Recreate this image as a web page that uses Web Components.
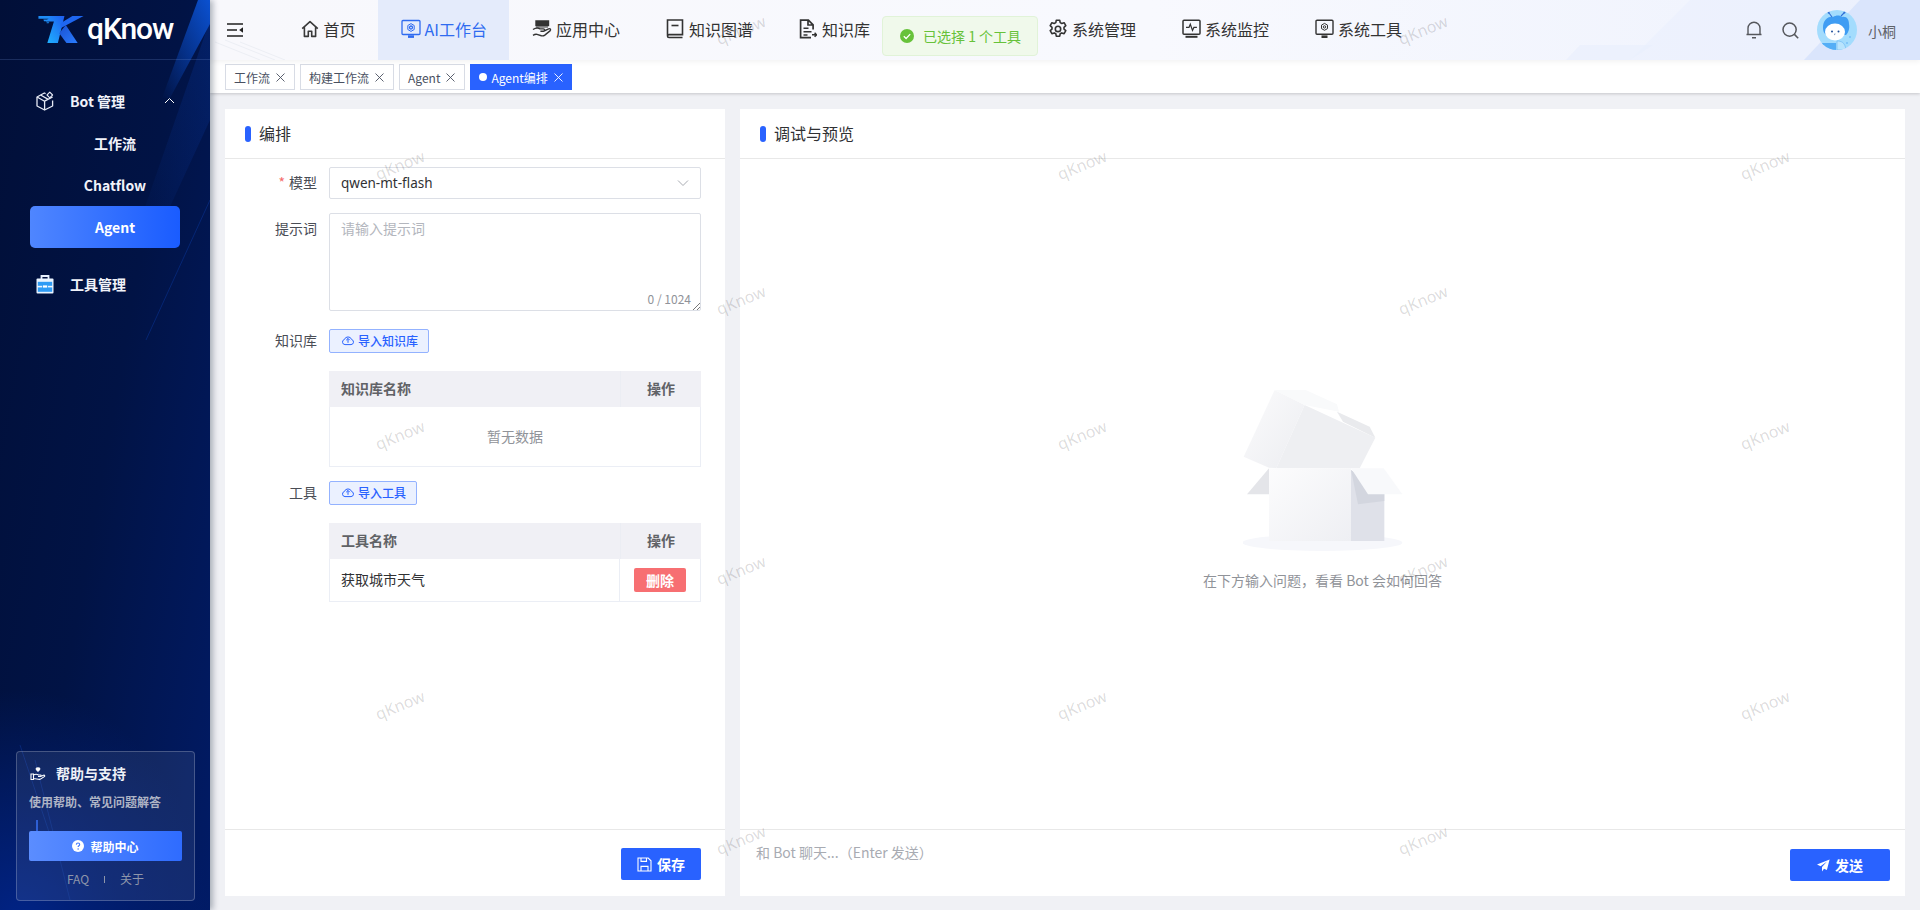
<!DOCTYPE html>
<html lang="zh-CN">
<head>
<meta charset="utf-8">
<title>qKnow</title>
<style>
html,body{margin:0;padding:0;height:100%;overflow:hidden;background:#f0f2f5;
font-family:"Noto Sans CJK SC",sans-serif;color:#303133;}
</style>
</head>
<body>
<qk-app>
  <qk-sidebar slot="side">
    <qk-logo></qk-logo>
    <qk-menu-item icon="bot" chevron>Bot 管理</qk-menu-item>
    <qk-sub-item>工作流</qk-sub-item>
    <qk-sub-item>Chatflow</qk-sub-item>
    <qk-sub-item active>Agent</qk-sub-item>
    <qk-menu-item icon="tool" style="margin-top:15px">工具管理</qk-menu-item>
    <qk-help></qk-help>
  </qk-sidebar>

  <qk-header slot="head">
    <qk-nav-item>
      <svg slot="icon" width="18" height="18" viewBox="0 0 18 18" fill="none" stroke="#3a3a3a" stroke-width="1.6" stroke-linejoin="round"><path d="M1.2 8.6 9 1.6l7.8 7M3.4 7.2V16.4h3.9v-5.2h3.4v5.2h3.9V7.2"/></svg>首页</qk-nav-item>
    <qk-nav-item active>
      <svg slot="icon" width="20" height="20" viewBox="0 0 20 20" fill="none" stroke="#2f6bf0" stroke-width="1.3"><rect x="1" y="1.5" width="18" height="14" rx="1"/><path d="M7 17.6h6" stroke-width="2.6"/><circle cx="10" cy="8.5" r="1.5"/><path d="M10 4.6l3.2 1.9v4l-3.2 1.9-3.2-1.9v-4z" stroke-width="1"/></svg>AI工作台</qk-nav-item>
    <qk-nav-item>
      <svg slot="icon" width="20" height="18" viewBox="0 0 20 18" fill="none" stroke="#333" stroke-width="1.4"><path d="M4 1h12.5v4.5H4z" fill="#333"/><path d="M1 9.5c2.5-1.6 5-2 7-.6h3.5c1.4 0 1.4 2.4 0 2.4H8.4M12 11l4.6-2.2c1.7-.6 2.6 1 1.4 2.1l-5.2 4.2c-1 .7-2.2.9-3.4.6L5 14.4c-1.4-.3-2.6.1-4 1"/><path d="M4 7h12" stroke-width="1"/></svg>应用中心</qk-nav-item>
    <qk-nav-item>
      <svg slot="icon" width="18" height="20" viewBox="0 0 18 20" fill="none" stroke="#333" stroke-width="1.6"><path d="M1.5 16.4V1h15v14.6H3c-1 0-1.5.6-1.5 1.4s.5 1.5 1.5 1.5h13.5"/><path d="M5.5 6.5h7"/></svg>知识图谱</qk-nav-item>
    <qk-nav-item>
      <svg slot="icon" width="18" height="20" viewBox="0 0 18 20" fill="none" stroke="#333" stroke-width="1.7"><path d="M12 18.6H1.6V1.2h7.8l4.7 4.7v4.6M9 1.4v4.6h5"/><path d="M4.5 9.2h5M4.5 12.8h8M4.5 16h4M13 15.8h4.4M15.6 13.8l2 2-2 2" stroke-width="1.5"/></svg>知识库</qk-nav-item>
    <qk-nav-spacer></qk-nav-spacer>
    <qk-nav-item>
      <svg slot="icon" width="20" height="20" viewBox="0 0 20 20" fill="none" stroke="#333" stroke-width="1.6" stroke-linejoin="round"><path d="M8.3 1.2h3.4l.5 2.4 1.6.9 2.3-.8 1.7 3-1.8 1.6v1.8l1.8 1.6-1.7 3-2.3-.8-1.6.9-.5 2.4H8.3l-.5-2.4-1.6-.9-2.3.8-1.7-3 1.8-1.6V8.3L2.2 6.7l1.7-3 2.3.8 1.6-.9z"/><circle cx="10" cy="9.9" r="2.7"/></svg>系统管理</qk-nav-item>
    <qk-nav-item>
      <svg slot="icon" width="19" height="20" viewBox="0 0 19 20" fill="none" stroke="#333" stroke-width="1.5"><rect x="1" y="1.2" width="17" height="14" rx="1"/><path d="M3.5 17.8h12" stroke-width="2"/><path d="M4 8.4h3l1.3-3.2 2.2 6.2 1.4-3h3" stroke-width="1.2"/></svg>系统监控</qk-nav-item>
    <qk-nav-item>
      <svg slot="icon" width="19" height="20" viewBox="0 0 19 20" fill="none" stroke="#333" stroke-width="1.4"><rect x="1" y="1.2" width="17" height="14" rx="1"/><path d="M6.5 17.7h6" stroke-width="2.6"/><path d="M9.5 4.4l3 1.7v3.5l-3 1.7-3-1.7V6.1z" stroke-width="1"/><circle cx="9.5" cy="7.9" r="1.2" stroke-width="1"/></svg>系统工具</qk-nav-item>
    <qk-user slot="right"></qk-user>
  </qk-header>

  <qk-tags slot="tags">
    <qk-tag>工作流</qk-tag>
    <qk-tag>构建工作流</qk-tag>
    <qk-tag>Agent</qk-tag>
    <qk-tag active>Agent编排</qk-tag>
  </qk-tags>

  <qk-card style="width:500px" slot="left" heading="编排">
    <qk-form>
      <qk-row label="模型" required><qk-select>qwen-mt-flash</qk-select></qk-row>
      <qk-row label="提示词" style="margin-top:14px"><qk-textarea placeholder="请输入提示词" counter="0 / 1024"></qk-textarea></qk-row>
      <qk-row label="知识库" style="margin-top:18px" compact><qk-import>导入知识库</qk-import></qk-row>
      <qk-row style="margin-top:18px">
        <qk-table heading="知识库名称"><qk-empty-row>暂无数据</qk-empty-row></qk-table>
      </qk-row>
      <qk-row label="工具" style="margin-top:14px" compact><qk-import>导入工具</qk-import></qk-row>
      <qk-row style="margin-top:18px">
        <qk-table heading="工具名称"><qk-table-row>获取城市天气<qk-danger slot="action">删除</qk-danger></qk-table-row></qk-table>
      </qk-row>
    </qk-form>
    <qk-primary slot="footer" style="margin-left:auto;margin-right:24px">
      <svg slot="icon" width="15" height="15" viewBox="0 0 15 15" fill="none" stroke="#fff" stroke-width="1.1"><path d="M1 1h10.2L14 3.8V14H1zM4 14V9.4h7V14M4 1v3.4h5.5V1"/></svg>保存</qk-primary>
  </qk-card>

  <qk-card style="flex:1" slot="left" heading="调试与预览">
    <qk-empty>在下方输入问题，看看 Bot 会如何回答</qk-empty>
    <qk-chat-hint slot="footer">和 Bot 聊天...（Enter 发送）</qk-chat-hint>
    <qk-primary slot="footer" wide style="margin-left:auto;margin-right:15px;margin-top:1px">
      <svg slot="icon" width="13" height="13" viewBox="0 0 13 13"><path d="M12.6.4 0 5.6l3.6 1.6L10 2.6 5 8v4.4l2-2.7 2.9 1.2z" fill="#fff"/></svg>发送</qk-primary>
  </qk-card>

  <qk-toast slot="over">已选择 1 个工具</qk-toast>
  <qk-watermark slot="over"></qk-watermark>
</qk-app>

<script>
const ICONS = {
  bot:`<svg width="18" height="20" viewBox="0 0 18 20" fill="none" stroke="#e6eaf5" stroke-width="1.3" stroke-linejoin="round"><path d="M9.6 2.6 8.3 2 1 6v9l7.6 4 8-4V9.4"/><path d="M1 6l7.6 4.2 8-4.2M8.6 10.2V19M4.6 4l7.6 4.4"/><path d="M13.8 1.2l2.8 2.8-2.8 2.8L11 4z" stroke-width="1.1"/></svg>`,
  tool:`<svg width="18" height="19" viewBox="0 0 18 19"><path d="M5.5 4V1h7v3" fill="none" stroke="#eaf2ff" stroke-width="1.8"/><rect x="0.5" y="3.5" width="17" height="15" rx="1" fill="#eaf4ff"/><rect x="1.8" y="6.8" width="14.4" height="4" fill="#2e9bf5"/><rect x="1.8" y="12.4" width="14.4" height="4.4" fill="#2e9bf5"/><rect x="6.5" y="10" width="5" height="3" fill="#fff" stroke="#2e9bf5" stroke-width=".8"/></svg>`
};
const define = (name, html, extra) => {
  class E extends HTMLElement {
    constructor(){ super(); this.attachShadow({mode:'open'}).innerHTML = typeof html === 'function' ? html(this) : html; }
    connectedCallback(){ if (extra) extra(this); }
  }
  customElements.define(name, E);
};

define('qk-app', `<style>
:host{display:grid;grid-template-columns:210px 1fr;height:910px;position:relative;overflow:hidden;background:#f0f1f5}
.main{display:flex;flex-direction:column;min-width:0;height:910px}
.content{flex:1;display:flex;gap:15px;padding:16px 15px 14px;min-height:0}
::slotted([slot=side]){z-index:3}
</style>
<slot name="side"></slot>
<div class="main">
  <slot name="head"></slot>
  <slot name="tags"></slot>
  <div class="content"><slot name="left"></slot></div>
</div>
<slot name="over"></slot>`);

define('qk-sidebar', `<style>
:host{display:flex;flex-direction:column;position:relative;height:910px;color:#fff;overflow:hidden;
 background:
  radial-gradient(ellipse 190px 240px at 20px 930px,#012488 0%,rgba(1,36,136,0) 100%),
  linear-gradient(100deg,#010f38 0%,#011345 50%,#011b66 100%);
 box-shadow:3px 0 6px rgba(0,21,41,.3);}
svg.bg{position:absolute;left:0;top:0;pointer-events:none}
.wrap{position:relative;display:flex;flex-direction:column;flex:1}
</style>
<svg class="bg" width="210" height="910" viewBox="0 0 210 910">
  <defs>
    <linearGradient id="g1" x1="1" y1="0" x2="0" y2="1"><stop offset="0" stop-color="#0b54d8" stop-opacity=".95"/><stop offset="1" stop-color="#0b54d8" stop-opacity="0"/></linearGradient>
    <linearGradient id="g2" x1="1" y1="0" x2="0" y2="1"><stop offset="0" stop-color="#0a3fb0" stop-opacity=".6"/><stop offset="1" stop-color="#0a3fb0" stop-opacity="0"/></linearGradient>
  </defs>
  <polygon points="198,0 210,0 210,24 170,98 162,98" fill="url(#g1)"/>
  <polygon points="210,20 210,120 150,250 130,250" fill="url(#g2)" opacity=".45"/>
  <path d="M210 200 146 340" stroke="#0c3fae" stroke-width="1" opacity=".4"/>
  <path d="M20 745 55 850M35 760 70 900" stroke="#0d3aa0" stroke-width="1" opacity=".45"/>
  <rect x="36" y="820" width="2" height="16" fill="#2b6bff" opacity=".7"/>
</svg>
<div class="wrap"><slot></slot></div>`);

define('qk-logo', `<style>
:host{display:flex;align-items:center;height:59px;border-bottom:1px solid rgba(120,150,220,.22);padding-left:38px;box-sizing:content-box;gap:2px}
span{font:500 30px/1 Roboto,sans-serif;color:#fff;letter-spacing:-1.1px;position:relative;top:-1px}
svg{display:block}
</style>
<svg width="47" height="29" viewBox="113 55 140 88">
  <defs>
    <linearGradient id="k" x1="0" y1="1" x2="1" y2="0"><stop offset="0" stop-color="#1fb4ff"/><stop offset="1" stop-color="#1e5cf0"/></linearGradient>
    <linearGradient id="k2" x1="0" y1="0" x2="1" y2="1"><stop offset="0" stop-color="#1a4fd0"/><stop offset="1" stop-color="#2a7dff"/></linearGradient>
  </defs>
  <path d="M113 58h58l-5 8h-53zM128 69h18l-2 5h-14zM138 77h8l-2 3h-6z" fill="#1e8cf5"/>
  <polygon points="150,58 192,58 172,140 140,140 160,75 135,75" fill="url(#k)"/>
  <polygon points="180,95 250,58 216,58 180,80" fill="#1e66f0"/>
  <polygon points="176,110 196,85 232,140 198,140" fill="url(#k2)"/>
</svg><span>qKnow</span>`);

define('qk-menu-item', el => `<style>
:host{display:flex;align-items:center;height:42px;padding-left:36px;position:relative;font-size:14px;font-weight:700;color:#f1f3fa;line-height:20px}
.ic{width:18px;display:flex;justify-content:center;margin-right:16px}
.chev{position:absolute;left:164px;top:17px}
</style>
<span class="ic">${ICONS[el.getAttribute('icon')]||''}</span><slot></slot>
${el.hasAttribute('chevron')?'<svg class="chev" width="11" height="7" viewBox="0 0 11 7" fill="none" stroke="#fff" stroke-width="1"><path d="M1 6l4.5-4.5L10 6"/></svg>':''}`,
 el => { if (el.hasAttribute('chevron')) el.style.marginTop='20px'; });

define('qk-sub-item', `<style>
:host{display:flex;align-items:center;justify-content:center;height:42px;margin:0 30px;width:150px;padding-left:20px;box-sizing:border-box;font-size:14px;font-weight:700;color:#f1f3fa;border-radius:5px}
:host([active]){background:linear-gradient(90deg,#4f86ff,#1a5cff);color:#fff}
</style><slot></slot>`);

define('qk-help', `<style>
:host{display:block;margin:auto 15px 9px 16px;height:150px;box-sizing:border-box;border:1px solid rgba(255,255,255,.22);border-radius:4px;background:rgba(255,255,255,.075);padding:0 12px}
.t{display:flex;align-items:center;height:22px;margin-top:10px;font-size:14px;font-weight:700;color:#eef1f8;line-height:22px}
.t svg{margin:1px 10px 0 1px}
.d{font-size:12px;font-weight:700;color:#aeb4c5;line-height:18px;margin-top:9px}
.b{display:flex;align-items:center;justify-content:center;gap:6px;height:30px;margin-top:20px;border-radius:2px;background:linear-gradient(90deg,#5b8dff,#2f6cff);font-size:12px;font-weight:700;color:#fff}
.f{display:flex;justify-content:center;align-items:center;font-size:12px;color:#8e96aa;margin-top:9px;line-height:18px}
.f i{width:1px;height:7px;background:#8e96aa;margin:0 15px}
</style>
<div class="t"><svg width="16" height="14" viewBox="0 0 16 14" fill="none" stroke="#fff" stroke-width="1.1"><path d="M1 7h2.5v5.5H1zM3.5 8c2-1.2 3.5-1 5 0h2c.9 0 .9 1.5 0 1.5H8M10.5 9.5l3-1.3c1.1-.4 1.7.7.8 1.4l-3.8 2.5c-.7.4-1.4.4-2.2.2L3.5 11.5"/><path d="M8 1.2c-1-.9-2.4.4-1.4 1.6L8 4.2l1.4-1.4c1-1.2-.4-2.5-1.4-1.6z" fill="#fff"/></svg><span>帮助与支持</span></div>
<div class="d">使用帮助、常见问题解答</div>
<div class="b"><svg width="12" height="12" viewBox="0 0 12 12"><circle cx="6" cy="6" r="6" fill="#fff"/><path d="M4.3 4.6C4.4 3.6 5.1 3 6 3c1 0 1.7.6 1.7 1.5 0 1.3-1.6 1.3-1.6 2.6" fill="none" stroke="#3f77ff" stroke-width="1.1"/><circle cx="6.1" cy="8.9" r=".75" fill="#3f77ff"/></svg><span>帮助中心</span></div>
<div class="f"><span>FAQ</span><i></i><span>关于</span></div>`);

define('qk-header', `<style>
:host{display:flex;align-items:stretch;height:60px;position:relative;z-index:2;background:linear-gradient(90deg,#f8f8fc 0%,#f8f9fe 55%,#eef2fd 100%);box-shadow:0 2px 5px rgba(0,0,0,.05);padding-left:17px;box-sizing:border-box}
svg.bg{position:absolute;left:0;top:0;width:100%;height:60px}
.bar{position:relative;display:flex;align-items:center;width:16px;margin-right:34px}
.nav{position:relative;display:flex;align-items:stretch}
.r{position:relative;margin-left:auto;display:flex}
::slotted(svg){flex:none}
</style>
<svg class="bg" viewBox="0 0 1710 60" preserveAspectRatio="none">
  <polygon points="1356,60 1420,60 1443,45 1370,45" fill="#eaeffc" opacity=".7"/>
  <polygon points="1420,60 1480,0 1710,0 1710,60" fill="#e9effd" opacity=".55"/>
  <polygon points="1594,60 1650,0 1710,0 1710,60" fill="#dae5fc"/>
  <path d="M5 42 50 60M15 40 65 60M30 42 75 60" stroke="#eceef4" stroke-width="1"/>
</svg>
<div class="bar"><svg width="16" height="14" viewBox="0 0 16 14" fill="none" stroke="#1f1f1f" stroke-width="1.5"><path d="M0 1h16M0 7h10M0 13h16"/><path d="M16 4.2v5.6L12.2 7z" fill="#1f1f1f" stroke="none"/></svg></div>
<div class="nav"><slot></slot></div>
<div class="r"><slot name="right"></slot></div>`);

define('qk-nav-item', `<style>
:host{display:flex;align-items:center;justify-content:center;gap:4px;padding:0 22.5px 3px;height:60px;box-sizing:border-box;font-size:16px;color:#333;white-space:nowrap}
:host([active]){background:#e4ebfb;color:#2f6bf0}
.i{width:20px;height:20px;flex:none;display:flex;align-items:center;justify-content:center}
::slotted(svg){flex:none}
</style><span class="i"><slot name="icon"></slot></span><slot></slot>`);

define('qk-nav-spacer', `<style>:host{display:block;width:133px}</style>`);

define('qk-user', `<style>
:host{display:flex;align-items:center;height:60px;padding-right:24px}
svg{display:block}
.n{font-size:14px;color:#5f6368;margin-left:11px;position:relative;top:1px}
.ic{margin-right:20px}
</style>
<svg class="ic" width="16" height="18" viewBox="0 0 16 18" fill="none" stroke="#55575c" stroke-width="1.4"><path d="M2 13.5V7.2a6 6 0 0 1 12 0v6.3M.5 13.5h15M6 16.8h4"/></svg>
<svg class="ic" style="margin-right:18px" width="17" height="17" viewBox="0 0 17 17" fill="none" stroke="#55575c" stroke-width="1.5"><circle cx="7.6" cy="7.6" r="6.6"/><path d="M12.4 12.4l3.8 3.8"/></svg>
<svg width="40" height="40" viewBox="0 0 40 40">
  <defs><clipPath id="c"><circle cx="20" cy="20" r="20"/></clipPath></defs>
  <g clip-path="url(#c)">
    <rect width="40" height="40" fill="#a3dcfd"/>
    <path d="M6 18C6 10 11 6 16 7c3-2 7-2 9 0 5-1 7 3 7 7 1 5-1 9-3 11H9c-2-2-3-4-3-7z" fill="#3f9df3"/>
    <path d="M15 7l-3-4M24 6l3-3" stroke="#2f6fd6" stroke-width="1.1"/>
    <circle cx="11.6" cy="2.6" r="1.1" fill="#2f6fd6"/><circle cx="27.4" cy="2.6" r="1.1" fill="#2f6fd6"/>
    <ellipse cx="18" cy="22" rx="10" ry="8.5" fill="#fff"/>
    <circle cx="15" cy="21.5" r="1" fill="#1f4f9a"/><circle cx="21.5" cy="21.5" r="1" fill="#1f4f9a"/>
    <path d="M18 23.5l-.5 1.6" stroke="#1f4f9a" stroke-width=".6"/>
    <path d="M5 33h14v8H5z" fill="#54aef6"/><path d="M20 31c4 0 8 1 9 9H20z" fill="#b9e4fd" stroke="#6ab6f3" stroke-width=".6"/>
    <circle cx="33" cy="27" r=".7" fill="#4ba2ee"/><circle cx="30" cy="33" r=".7" fill="#4ba2ee"/>
  </g>
</svg>
<span class="n">小桐</span>`);

define('qk-tags', `<style>
:host{display:flex;align-items:flex-start;gap:5px;height:33px;box-sizing:border-box;padding:4px 0 0 15px;background:#fff;box-shadow:0 1px 3px rgba(0,0,0,.18);position:relative;z-index:1}
</style><slot></slot>`);

define('qk-tag', `<style>
:host{display:inline-flex;align-items:center;height:26px;box-sizing:border-box;padding:0 8px;border:1px solid #d8dce5;background:#fff;color:#495060;font-size:12px;white-space:nowrap}
:host([active]){background:#2962ff;border-color:#2962ff;color:#fff;padding-right:7px}
:host([active])::before{content:"";width:8px;height:8px;border-radius:50%;background:#fff;margin-right:4px}
svg{margin-left:5px;display:block}
</style><slot></slot><svg width="11" height="11" viewBox="0 0 11 11" fill="none" stroke="currentColor" stroke-width=".9"><path d="M1.5 1.5l8 8M9.5 1.5l-8 8"/></svg>`);

define('qk-card', el => `<style>
:host{display:flex;flex-direction:column;background:#fff;min-width:0;height:100%}
.h{display:flex;align-items:center;height:49px;padding-left:20px;border-bottom:1px solid #e8e8e8;font-size:16px;color:#303133;box-sizing:content-box;flex:none}
.h i{width:6px;height:16px;border-radius:3px;background:#2962ff;margin-right:8px}
.h span{position:relative;top:-1px}
.b{flex:1;min-height:0;display:flex;flex-direction:column}
.f{border-top:1px solid #e8e8e8;display:flex;align-items:flex-start;padding-top:18px;box-sizing:content-box;height:48px;flex:none}
</style>
<div class="h"><i></i><span>${el.getAttribute('heading')}</span></div>
<div class="b"><slot></slot></div>
<div class="f"><slot name="footer"></slot></div>`);

define('qk-form', `<style>:host{display:block;padding:8px 24px 0 0}</style><slot></slot>`);

define('qk-row', el => {
  const lab = el.getAttribute('label');
  const req = el.hasAttribute('required');
  const compact = el.hasAttribute('compact');
  return `<style>
:host{display:flex;align-items:flex-start}
.l{width:92px;margin-right:12px;text-align:right;font-size:14px;color:#4a4d55;line-height:${compact?22:30}px;flex:none}
.l b{color:#f56c6c;font-weight:400;margin-right:4px}
.c{flex:1;min-width:0}
</style><div class="l">${req?'<b>*</b>':''}${lab||''}</div><div class="c"><slot></slot></div>`;
});

define('qk-select', `<style>
:host{display:flex;align-items:center;justify-content:space-between;height:32px;box-sizing:border-box;border:1px solid #dcdfe6;border-radius:2px;padding:0 11px;font:13.5px "Noto Sans",sans-serif;color:#303133;background:#fff}
</style><slot></slot><svg width="12" height="8" viewBox="0 0 12 8" fill="none" stroke="#a8abb2" stroke-width="1"><path d="M1 1.5l5 5 5-5"/></svg>`);

define('qk-textarea', el => `<style>
:host{display:block;position:relative;height:98px;box-sizing:border-box;border:1px solid #dcdfe6;border-radius:2px;padding:3px 11px;font-size:14px;line-height:22px;color:#b3b6bd;background:#fff}
.c{position:absolute;right:9px;bottom:1px;font-size:12px;line-height:20px;color:#909399}
svg{position:absolute;right:0;bottom:0}
</style><span>${el.getAttribute('placeholder')}</span><span class="c">${el.getAttribute('counter')}</span>
<svg width="8" height="8" viewBox="0 0 8 8" stroke="#555" stroke-width=".8"><path d="M1 8l7-7M5 8l3-3"/></svg>`);

define('qk-import', `<style>
:host{display:inline-flex;align-items:center;height:24px;box-sizing:border-box;padding:0 10px 2px 12px;border:1px solid #93b2ff;border-radius:2px;background:#ebf1ff;color:#2962ff;font-size:12px;font-weight:500;vertical-align:top}
svg{margin-right:4px;display:block}
</style><svg width="12" height="12" viewBox="0 0 12 12" fill="none" stroke="#2962ff" stroke-width="1"><path d="M3 10.6h6a2.6 2.6 0 0 0 .6-5.1 3.8 3.8 0 0 0-7.2 0A2.6 2.6 0 0 0 3 10.6z"/><path d="M6 8.8V4.6M4.2 6.2 6 4.4l1.8 1.8"/></svg><slot></slot>`);

define('qk-table', el => `<style>
:host{display:block;border:solid #ebeef5;border-width:0 1px 1px;font-size:14px}
.h{display:grid;grid-template-columns:1fr 81px;height:36px;background:#f0f0f5;margin:0 -1px;font-weight:700;color:#606266;line-height:34px}
.h span:first-child{padding-left:12px}
.h span:last-child{text-align:center;border-left:1px solid #ebedf3}
</style><div class="h"><span>${el.getAttribute('heading')}</span><span>操作</span></div><slot></slot>`);

define('qk-empty-row', `<style>:host{display:flex;align-items:center;justify-content:center;height:59px;box-sizing:border-box;padding-bottom:2px;font-size:14px;color:#909399}</style><slot></slot>`);

define('qk-table-row', `<style>
:host{display:grid;grid-template-columns:1fr 81px;height:42px;align-items:center;color:#303133;font-size:14px}
.a{height:100%;display:flex;align-items:center;justify-content:center;border-left:1px solid #ebeef5}
.n{padding:0 0 3px 11px}
</style><div class="n"><slot></slot></div><div class="a"><slot name="action"></slot></div>`);

define('qk-danger', `<style>
:host{display:inline-flex;align-items:center;justify-content:center;width:52px;height:24px;border-radius:2px;background:#f76f72;color:#fff;font-size:14px;font-weight:700;box-sizing:border-box;padding-bottom:1px}
</style><slot></slot>`);

define('qk-primary', el => `<style>
:host{display:inline-flex;align-items:center;justify-content:center;gap:5px;width:${el.hasAttribute('wide')?100:80}px;height:32px;flex:none;border-radius:2px;background:#2962ff;color:#fff;font-size:14px;font-weight:700}
span{display:flex}
</style><span><slot name="icon"></slot></span><slot></slot>`);

define('qk-chat-hint', `<style>:host{display:block;margin:-7px 0 0 16px;font-size:14px;line-height:22px;color:#a8abb2}</style><slot></slot>`);

define('qk-empty', `<style>
:host{flex:1;display:flex;flex-direction:column;align-items:center;justify-content:center;padding-bottom:8px;font-size:14px;color:#909399}
p{margin:19px 0 0;line-height:20px}
svg{display:block}
</style>
<svg width="160" height="161" viewBox="190 60 480 483">
 <defs>
  <linearGradient id="a" x1="0" y1="0" x2="1" y2="1"><stop offset="0" stop-color="#fcfcfd"/><stop offset="1" stop-color="#eeeff3"/></linearGradient>
  <linearGradient id="b" x1="0" y1="0" x2="1" y2="1"><stop offset="0" stop-color="#fbfbfc"/><stop offset="1" stop-color="#eceDF1"/></linearGradient>
 </defs>
 <ellipse cx="428" cy="518" rx="240" ry="25" fill="#f6f7fb"/>
 <polygon points="375,105 587,203 540,295 290,295" fill="#eeeff2"/>
 <polygon points="285,60 375,105 290,295 268,293 192,260" fill="url(#b)"/>
 <polygon points="285,60 378,60 472,103 478,125 375,105" fill="#f9fafb"/>
 <polygon points="472,125 570,170 587,203 490,155" fill="#e9eaed"/>
 <polygon points="268,295 268,373 202,373" fill="#e4e5e9"/>
 <rect x="268" y="295" width="246" height="218" fill="url(#a)"/>
 <polygon points="514,300 614,372 614,513 514,513" fill="#dfe1e9"/>
 <polygon points="514,300 535,403 614,393 614,372" fill="#d3d6df"/>
 <polygon points="514,295 612,295 668,373 565,373" fill="#f8f9fb"/>
</svg><p><slot></slot></p>`);

define('qk-toast', `<style>
:host{position:absolute;left:960px;top:16px;transform:translateX(-50%);z-index:6;display:flex;align-items:center;width:156px;height:40px;box-sizing:border-box;padding-left:17px;background:#f0f9eb;border:1px solid #e1f3d8;border-radius:4px;color:#67c23a;font-size:14px;white-space:nowrap}
svg{margin-right:9px;display:block}
</style><svg width="14" height="14" viewBox="0 0 14 14"><circle cx="7" cy="7" r="7" fill="#67c23a"/><path d="M3.8 7.2 6.1 9.5l4.1-4.4" fill="none" stroke="#fff" stroke-width="1.3"/></svg><slot></slot>`);

define('qk-watermark', () => {
  let out = `<style>
:host{position:absolute;inset:0;pointer-events:none;z-index:5;overflow:hidden}
span{position:absolute;transform:translate(-50%,-50%) rotate(-22deg);font:400 16px/1 "Noto Sans",sans-serif;color:rgba(0,0,0,.15);white-space:nowrap}
</style>`;
  [30,165,300,435,570,705,840].forEach((y,i) => {
    (i % 2 ? [400,1082,1765] : [741,1423]).forEach(x => {
      out += `<span style="left:${x}px;top:${y}px">qKnow</span>`;
    });
  });
  return out;
});
</script>
</body>
</html>
